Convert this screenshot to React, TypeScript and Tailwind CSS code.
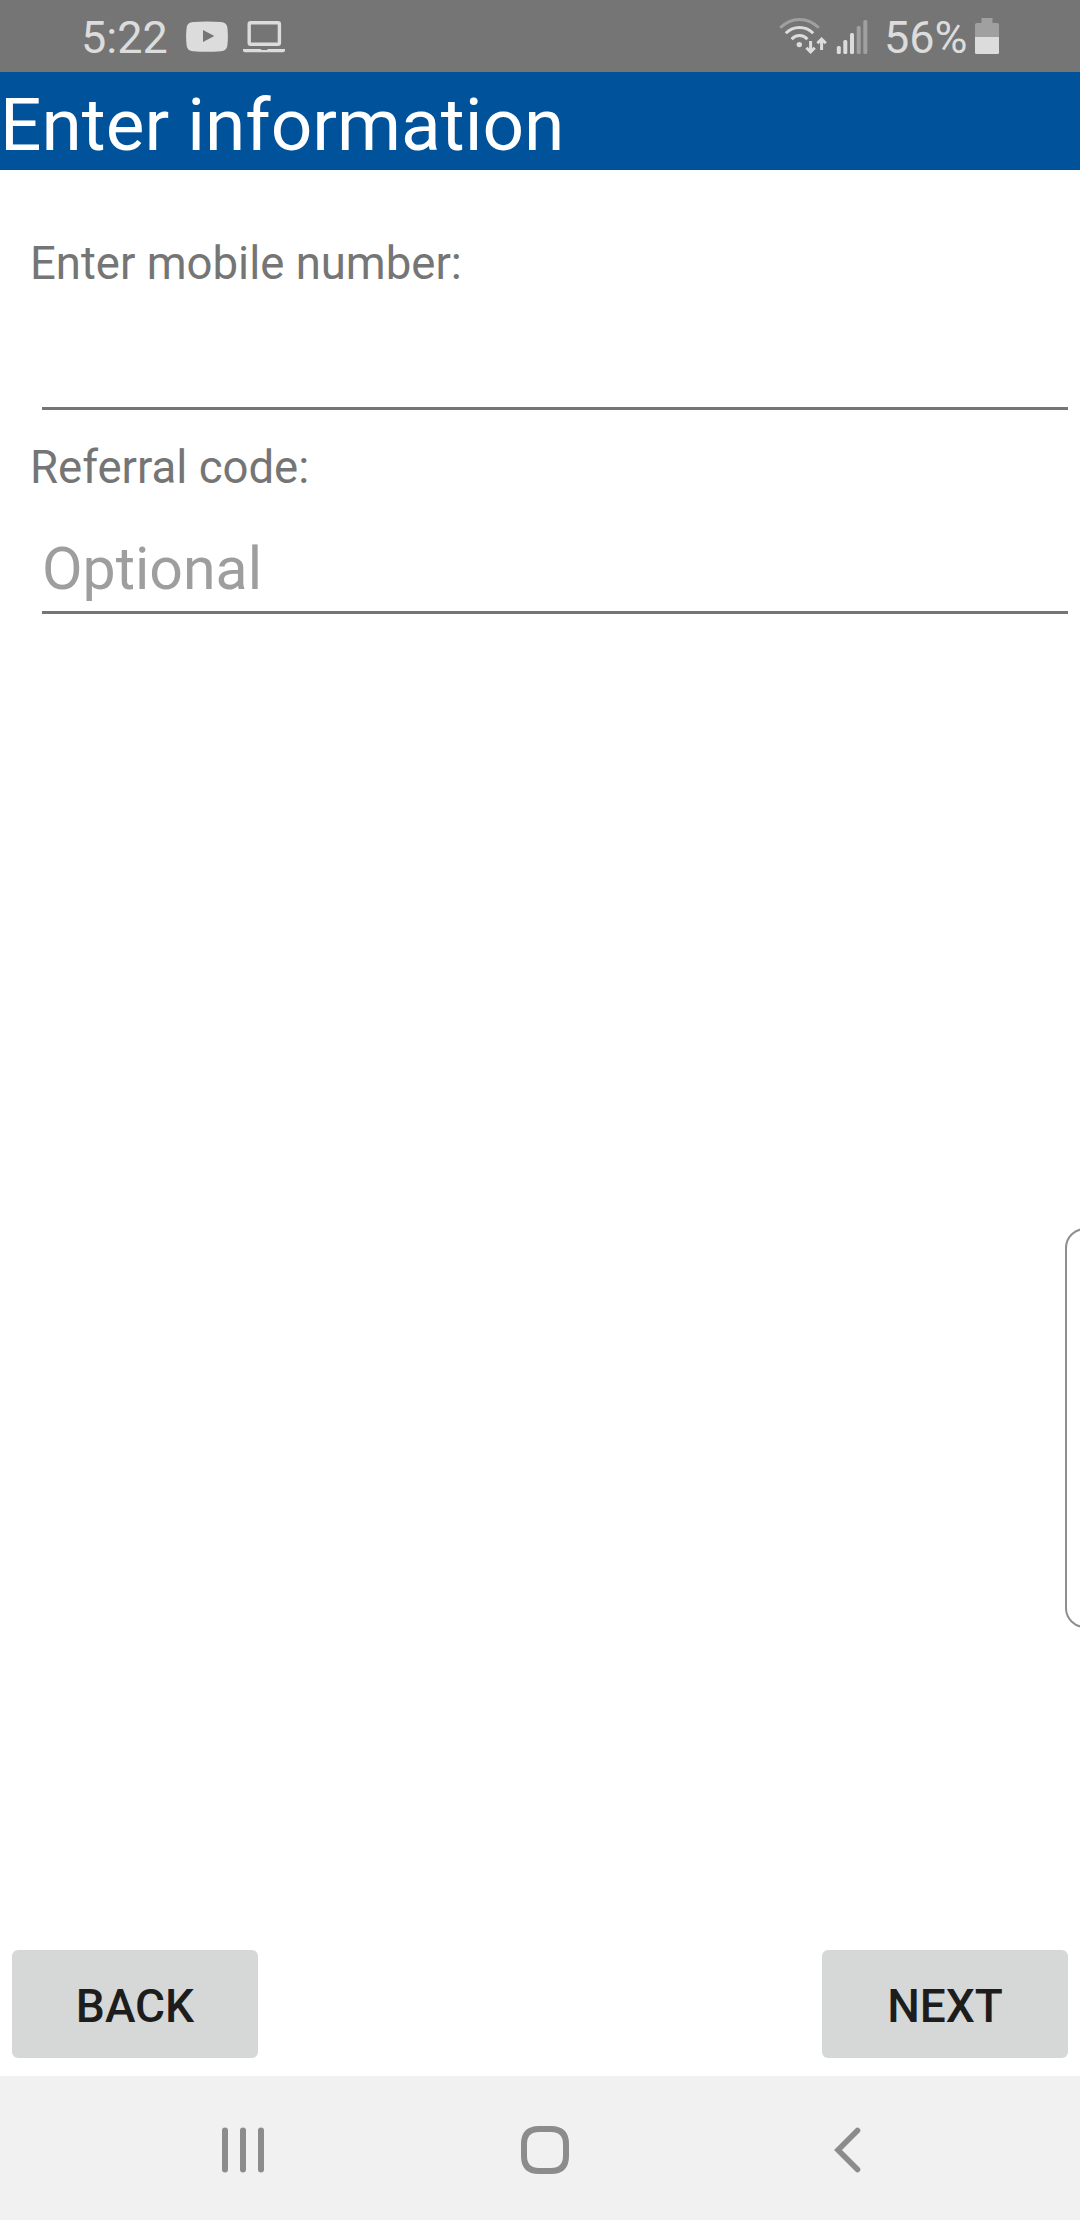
import React from 'react'

const StatusBar = () => {
  return (
    <div className="flex h-[72px] w-full items-start justify-between bg-[#757575] text-[#dcdcdc]">
      <div className="flex h-full items-start pl-[81px]">
        <span className="w-[105px] whitespace-nowrap text-[45px] leading-[76px]">5:22</span>
        <svg width="42" height="72" viewBox="186 0 42 72">
          <path
            fill="#dcdcdc"
            fillRule="evenodd"
            d="M193 22Q207 21 221 22Q226.500 22.300 227.300 27Q228.500 37 227.300 46Q226.500 51 221 51.300Q207 52.300 193 51.300Q187.500 51 186.700 46Q185.500 37 186.700 27Q187.500 22.300 193 22ZM203 30V42L214.300 36Z"
          />
        </svg>
        <svg className="ml-[15px]" width="42" height="72" viewBox="243 0 42 72">
          <rect x="249.200" y="22.700" width="30.200" height="21.500" rx="1.500" fill="none" stroke="#dcdcdc" strokeWidth="3.400" />
          <path fill="#dcdcdc" d="M243 49H260.500L261.500 50H267L268 49H285V50.500Q285 52.300 283 52.300H245Q243 52.300 243 50.500Z" />
        </svg>
      </div>
      <div className="flex h-full items-start pr-[81px]">
        <svg width="50" height="72" viewBox="778 0 50 72">
          <g fill="none" stroke="#dcdcdc" strokeWidth="3">
            <path stroke="#a0a0a0" d="M780.200 27.800Q788.500 19.400 799.500 19.400T818.800 27.800" />
            <path d="M785.800 33.300Q791.500 27.400 799.500 27.400T813.200 33.300" />
            <path d="M791.600 39.200Q795 35.500 799.500 35.500T807.400 39.200" />
            <path d="M810.600 41V51M806.400 47.800L810.600 52L814.800 47.800" />
            <path d="M821.600 50V40M817.400 43.200L821.600 39L825.800 43.200" />
          </g>
          <circle cx="799.300" cy="44.600" r="2.700" fill="#dcdcdc" />
        </svg>
        <svg className="ml-[8px]" width="34" height="72" viewBox="836 0 34 72">
          <g fill="#dcdcdc">
            <rect x="836.800" y="46" width="4" height="8" rx="1.500" />
            <rect x="843.300" y="40" width="4" height="14" rx="1.500" />
            <rect x="850" y="33" width="4" height="21" rx="1.500" />
          </g>
          <g fill="#a0a0a0">
            <rect x="856.700" y="26" width="4" height="28" rx="1.500" />
            <rect x="863.300" y="20" width="4" height="34" rx="1.500" />
          </g>
        </svg>
        <span className="ml-[14px] w-[91px] whitespace-nowrap text-[45px] leading-[76px]">56%</span>
        <svg width="24" height="72" viewBox="975 0 24 72">
          <path fill="#a0a0a0" d="M981.500 18H992.500V23H997Q999 23 999 25V37H975V25Q975 23 977 23H981.500Z" />
          <path fill="#dcdcdc" d="M975 37H999V52.500Q999 54 997.500 54H976.500Q975 54 975 52.500Z" />
        </svg>
      </div>
    </div>
  )
}

const Field = ({ label, placeholder }: { label: string; placeholder?: string }) => {
  return (
    <div className="flex h-[204px] flex-col pt-[31px]">
      <label className="pl-[30px] text-[45.5px] leading-[54px] text-[#757575]">{label}</label>
      <div className="ml-[42px] mr-[12px] mt-auto h-[84px] border-b-[3px] border-[#757575]">
        <input
          className="block h-[81px] w-full pb-[5px] text-[59px] leading-[76px] outline-none placeholder:text-[#9e9e9e]"
          placeholder={placeholder}
        />
      </div>
    </div>
  )
}

const ActionButton = ({ children }: { children: React.ReactNode }) => {
  return (
    <button className="h-[108px] w-[246px] rounded-[6px] bg-[#d6d8d7] text-[46px] font-medium leading-[112px] text-[#1d1d1d]">
      {children}
    </button>
  )
}

const NavBar = () => {
  return (
    <div className="grid h-[144px] w-full grid-cols-[222px_299px_313px_1fr] items-center bg-[#f1f1f1] pt-[4px]">
      <div />
      <svg width="42" height="48" viewBox="0 0 42 48" fill="none" stroke="#8c8c8c" strokeWidth="6" strokeLinecap="round">
        <path d="M3 4.500V43.500M21 4.500V43.500M39 4.500V43.500" />
      </svg>
      <svg width="48" height="48" viewBox="0 0 48 48" fill="none" stroke="#8c8c8c" strokeWidth="6">
        <path d="M18 3H30Q45 3 45 18V30Q45 45 30 45H18Q3 45 3 30V18Q3 3 18 3Z" />
      </svg>
      <svg width="27" height="48" viewBox="0 0 27 48" fill="none" stroke="#8c8c8c" strokeWidth="5.600" strokeLinecap="round">
        <path d="M23.500 4.500L4 24L23.500 43.500" />
      </svg>
    </div>
  )
}

const App = () => {
  return (
    <div className="relative flex h-[2220px] w-[1080px] flex-col overflow-hidden bg-white font-['Roboto',sans-serif]">
      <StatusBar />
      <div className="flex h-[98px] items-end bg-[#00529a]">
        <h1 className="whitespace-nowrap text-[73px] leading-[89px] text-white">Enter information</h1>
      </div>

      <div className="flex flex-1 flex-col pt-[36px]">
        <div>
          <Field label="Enter mobile number:" />
          <Field label="Referral code:" placeholder="Optional" />
        </div>
        <div className="mt-auto flex justify-between px-[12px] pb-[18px]">
          <ActionButton>BACK</ActionButton>
          <ActionButton>NEXT</ActionButton>
        </div>
      </div>

      <NavBar />

      {/* edge panel handle */}
      <div className="absolute left-[1065px] top-[1228px] h-[400px] w-[40px] rounded-[22px] border-2 border-[#8e8e8e]" />
    </div>
  )
}

export default App
